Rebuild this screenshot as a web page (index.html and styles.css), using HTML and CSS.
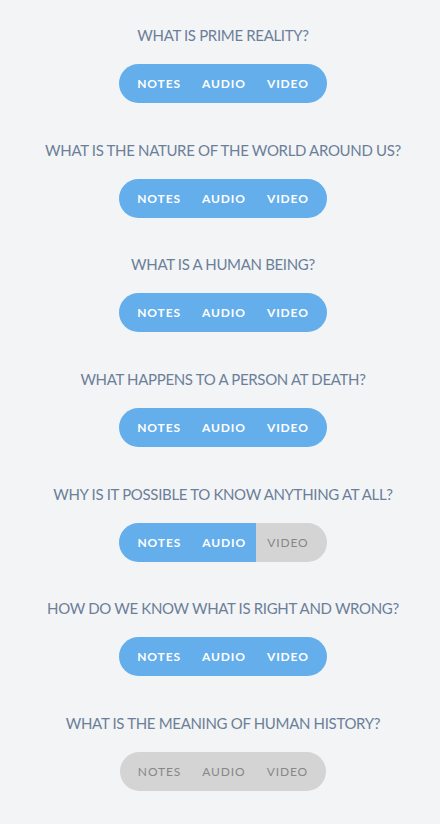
FILE: index.html
```html
<!DOCTYPE html>
<html>
<head>
<meta charset="utf-8">
<link rel="stylesheet" href="styles.css">
</head>
<body>
<main class="list">
  <section class="item">
    <h2 class="title">WHAT IS PRIME REALITY?</h2>
    <div class="pill"><a class="seg on">NOTES</a><a class="seg on">AUDIO</a><a class="seg on">VIDEO</a></div>
  </section>
  <section class="item">
    <h2 class="title">WHAT IS THE NATURE OF THE WORLD AROUND US?</h2>
    <div class="pill"><a class="seg on">NOTES</a><a class="seg on">AUDIO</a><a class="seg on">VIDEO</a></div>
  </section>
  <section class="item">
    <h2 class="title">WHAT IS A HUMAN BEING?</h2>
    <div class="pill"><a class="seg on">NOTES</a><a class="seg on">AUDIO</a><a class="seg on">VIDEO</a></div>
  </section>
  <section class="item">
    <h2 class="title">WHAT HAPPENS TO A PERSON AT DEATH?</h2>
    <div class="pill"><a class="seg on">NOTES</a><a class="seg on">AUDIO</a><a class="seg on">VIDEO</a></div>
  </section>
  <section class="item">
    <h2 class="title">WHY IS IT POSSIBLE TO KNOW ANYTHING AT ALL?</h2>
    <div class="pill"><a class="seg on">NOTES</a><a class="seg on">AUDIO</a><a class="seg off">VIDEO</a></div>
  </section>
  <section class="item">
    <h2 class="title">HOW DO WE KNOW WHAT IS RIGHT AND WRONG?</h2>
    <div class="pill"><a class="seg on">NOTES</a><a class="seg on">AUDIO</a><a class="seg on">VIDEO</a></div>
  </section>
  <section class="item">
    <h2 class="title">WHAT IS THE MEANING OF HUMAN HISTORY?</h2>
    <div class="pill"><a class="seg off">NOTES</a><a class="seg off">AUDIO</a><a class="seg off">VIDEO</a></div>
  </section>
</main>
</body>
</html>
```
FILE: styles.css
```css
html, body {
  margin: 0;
  padding: 0;
  background: #f3f4f6;
}
body {
  font-family: Lato, "Open Sans", sans-serif;
}
.list {
  display: flex;
  flex-direction: column;
  align-items: center;
  padding: 25px 0 0 6px;
  gap: 36.67px;
}
.item {
  display: flex;
  flex-direction: column;
  align-items: center;
}
.title {
  margin: 0;
  font-size: 15px;
  line-height: 20px;
  font-weight: 400;
  letter-spacing: -0.33px;
  color: #6b7f99;
  text-align: center;
}
.pill {
  margin-top: 19px;
  display: flex;
  height: 39px;
  border-radius: 20px;
  overflow: hidden;
}
.seg {
  display: flex;
  align-items: center;
  padding: 0 10px 0 11px;
  font-size: 12px;
  letter-spacing: 0.9px;
  font-weight: 700;
}
.seg:first-child { padding-left: 18px; }
.seg:last-child { padding-right: 18px; }
.seg.on {
  background: #63aeeb;
  color: #ffffff;
}
.seg.off {
  background: #d4d4d4;
  color: #878787;
  font-weight: 400;
}
```
